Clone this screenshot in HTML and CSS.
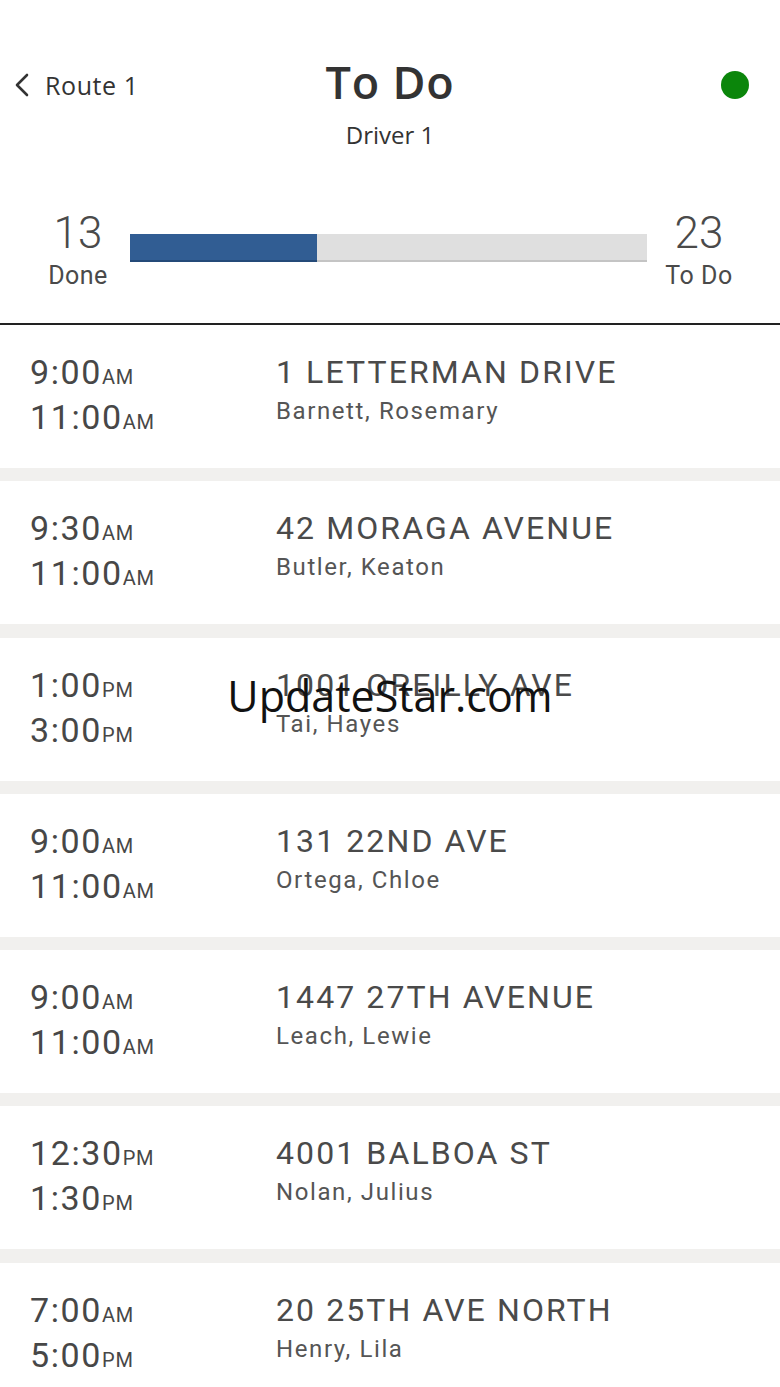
FILE: index.html
```html
<!DOCTYPE html>
<html lang="en">
<head>
<meta charset="utf-8">
<title>To Do</title>
<link rel="stylesheet" href="styles.css">
</head>
<body>
<div class="screen">
  <header class="header">
    <div class="topbar">
      <a class="back">
        <svg class="chev" width="16" height="24" viewBox="0 0 16 24"><path d="M13 2 L3 12 L13 22" fill="none" stroke="#333" stroke-width="2.6" stroke-linecap="round" stroke-linejoin="round"/></svg>
        <span>Route 1</span>
      </a>
      <h1 class="title">To Do</h1>
      <div class="status"><span class="dot"></span></div>
    </div>
    <div class="subtitle">Driver 1</div>
  </header>

  <section class="progress">
    <div class="stat">
      <div class="num">13</div>
      <div class="lbl">Done</div>
    </div>
    <div class="bar"><div class="fill" style="width:36.1%"></div></div>
    <div class="stat">
      <div class="num">23</div>
      <div class="lbl">To Do</div>
    </div>
  </section>

  <ul class="list">
    <li class="row">
      <div class="times"><div>9:00<span class="ap">AM</span></div><div>11:00<span class="ap">AM</span></div></div>
      <div class="info"><div class="addr">1 LETTERMAN DRIVE</div><div class="name">Barnett, Rosemary</div></div>
    </li>
    <li class="row">
      <div class="times"><div>9:30<span class="ap">AM</span></div><div>11:00<span class="ap">AM</span></div></div>
      <div class="info"><div class="addr">42 MORAGA AVENUE</div><div class="name">Butler, Keaton</div></div>
    </li>
    <li class="row">
      <div class="times"><div>1:00<span class="ap">PM</span></div><div>3:00<span class="ap">PM</span></div></div>
      <div class="info"><div class="addr">1001 OREILLY AVE</div><div class="name">Tai, Hayes</div></div>
    </li>
    <li class="row">
      <div class="times"><div>9:00<span class="ap">AM</span></div><div>11:00<span class="ap">AM</span></div></div>
      <div class="info"><div class="addr">131 22ND AVE</div><div class="name">Ortega, Chloe</div></div>
    </li>
    <li class="row">
      <div class="times"><div>9:00<span class="ap">AM</span></div><div>11:00<span class="ap">AM</span></div></div>
      <div class="info"><div class="addr">1447 27TH AVENUE</div><div class="name">Leach, Lewie</div></div>
    </li>
    <li class="row">
      <div class="times"><div>12:30<span class="ap">PM</span></div><div>1:30<span class="ap">PM</span></div></div>
      <div class="info"><div class="addr">4001 BALBOA ST</div><div class="name">Nolan, Julius</div></div>
    </li>
    <li class="row">
      <div class="times"><div>7:00<span class="ap">AM</span></div><div>5:00<span class="ap">PM</span></div></div>
      <div class="info"><div class="addr">20 25TH AVE NORTH</div><div class="name">Henry, Lila</div></div>
    </li>
  </ul>

  <div class="watermark">UpdateStar.com</div>
</div>
</body>
</html>
```

FILE: styles.css
```css
* { box-sizing: border-box; }
html, body { margin: 0; padding: 0; background: #fff; }
body { font-family: Roboto, "Liberation Sans", sans-serif; color: #4a4a4a; overflow: hidden; }
.screen { position: relative; width: 780px; height: 1387px; overflow: hidden; }

.header { padding-top: 56px; font-family: "Open Sans", "Liberation Sans", sans-serif; color: #333; }
.topbar { display: grid; grid-template-columns: 1fr auto 1fr; align-items: start; }
.back { display: flex; align-items: center; gap: 15px; padding-left: 14px; margin-top: 14px; font-size: 25px; line-height: 30px; letter-spacing: 0.6px; color: #333; text-decoration: none; }
.chev { display: block; }
.title { margin: 0; font-size: 45px; line-height: 52px; font-weight: 600; color: #333; letter-spacing: 0.8px; }
.status { display: flex; justify-content: flex-end; padding-right: 31px; margin-top: 15px; }
.dot { width: 28px; height: 28px; border-radius: 50%; background: #0b860b; display: block; }
.subtitle { text-align: center; font-size: 24px; line-height: 30px; margin-top: 12px; color: #333; }

.progress { display: grid; grid-template-columns: 100px 1fr 100px; column-gap: 2px; padding: 59px 31px 32px 28px; border-bottom: 2px solid #222; }
.stat { text-align: center; color: #4a4a4a; }
.num { font-size: 44px; line-height: 48px; font-weight: 300; }
.lbl { font-size: 25px; line-height: 30px; margin-top: 4px; letter-spacing: 0.5px; }
.bar { margin-top: 25px; height: 28px; background: #dfdfdf; border-bottom: 2px solid #c4c4c4; }
.fill { height: 28px; background: #315d93; border-bottom: 2px solid #244a78; }

.list { list-style: none; margin: 0; padding: 0; background: #f1f0ee; display: flex; flex-direction: column; gap: 13.3px; }
.row { background: #fff; height: 143px; display: flex; }
.times { width: 276px; flex: none; padding: 25px 0 0 30px; font-size: 34px; line-height: 45px; letter-spacing: 1.6px; color: #474747; }
.ap { font-size: 20px; line-height: 0; letter-spacing: 0.8px; }
.info { padding-top: 28px; }
.addr { font-size: 32px; line-height: 38px; letter-spacing: 2.1px; color: #4a4a4a; }
.name { font-size: 24px; line-height: 30px; margin-top: 5px; letter-spacing: 1.6px; color: #555; }

.watermark { position: absolute; left: 0; right: 0; top: 666px; text-align: center; font-family: "Open Sans", "Liberation Sans", sans-serif; font-size: 43px; line-height: 60px; color: #111; }
```
